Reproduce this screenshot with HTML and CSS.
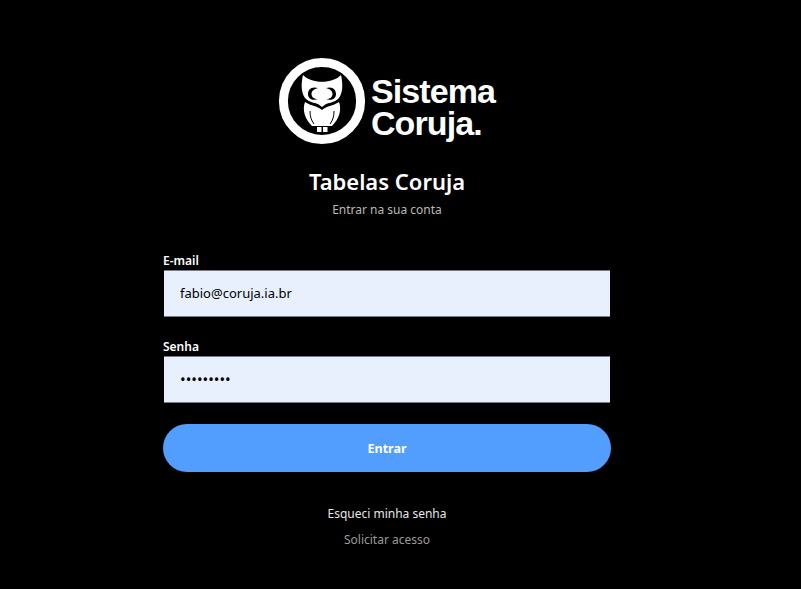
FILE: index.html
```html
<!DOCTYPE html>
<html lang="pt-BR">
  <head>
    <meta charset="UTF-8" />
    <meta name="viewport" content="width=device-width, initial-scale=1.0" />
    <title>Tabelas Coruja</title>
    <link rel="stylesheet" href="styles.css">
  </head>
  <body>
    <div class="login">
      <div class="logo">
        <svg class="logo-mark" width="88" height="90" viewBox="0 0 88 90">
          <circle cx="44" cy="45" r="38.6" fill="none" stroke="#fff" stroke-width="9" />
          <!-- head -->
          <path fill="#fff" d="M25 19 C33 28 55 28 63 19 C65 28 65 36 61 42 C56 47 50 47 48 48 L44 51 L40 48 C38 47 32 47 27 42 C23 36 23 28 25 19 Z" />
          <!-- eyes -->
          <path fill="#000" d="M40 32 C33 30 30 34 30 38 C30 43 35 45 40 43 C36 43 33.5 41 33.5 38 C33.5 35 36 33 40 32 Z" />
          <path fill="#000" d="M48 32 C55 30 58 34 58 38 C58 43 53 45 48 43 C52 43 54.5 41 54.5 38 C54.5 35 52 33 48 32 Z" />
          <!-- body and wings -->
          <path fill="#fff" d="M27 46 C33 50 40 50 44 54 C48 50 55 50 61 46 C64 54 61 63 54 70 L34 70 C27 63 24 54 27 46 Z" />
          <path fill="none" stroke="#000" stroke-width="1" d="M32 55 C32 60 33 64 36 68" />
          <path fill="none" stroke="#000" stroke-width="1" d="M56 55 C56 60 55 64 52 68" />
          <!-- feet -->
          <rect x="39" y="71" width="4.5" height="5" fill="#fff" />
          <rect x="45" y="71" width="4.5" height="5" fill="#fff" />
        </svg>
        <div class="logo-text">Sistema<br>Coruja.</div>
      </div>

      <h1>Tabelas Coruja</h1>
      <p class="subtitle">Entrar na sua conta</p>

      <form class="login-form">
        <label for="email">E-mail</label>
        <input type="email" id="email" value="fabio@coruja.ia.br" />
        <label for="senha">Senha</label>
        <input type="password" id="senha" value="123456789" />
        <button type="submit">Entrar</button>
      </form>

      <a class="forgot" href="#">Esqueci minha senha</a>
      <a class="request" href="#">Solicitar acesso</a>
    </div>
  </body>
</html>
```

FILE: styles.css
```css
body {
  margin: 0;
  padding: 0 27px 0 0;
  height: 589px;
  overflow: hidden;
  box-sizing: border-box;
  background-color: #000;
  color: #fff;
  font-family: "Noto Sans", "Open Sans", sans-serif;
}
.login {
  display: flex;
  flex-direction: column;
  align-items: center;
  padding-top: 56px;
}
.logo {
  display: flex;
  align-items: center;
  gap: 5px;
  height: 90px;
}
.logo-mark {
  display: block;
  margin-left: -1px;
}
.logo-text {
  font-family: "Liberation Sans", Arial, sans-serif;
  font-size: 34px;
  font-weight: 700;
  line-height: 32px;
  letter-spacing: -0.9px;
  margin-top: 11px;
}
h1 {
  margin: 19px 0 0;
  font-size: 22px;
  font-weight: 600;
  line-height: 32px;
}
.subtitle {
  margin: 3px 0 0;
  font-size: 12px;
  line-height: 20px;
  color: #b9b9b9;
}
.login-form {
  display: flex;
  flex-direction: column;
  width: 448px;
  margin-top: 32px;
}
label {
  font-size: 12px;
  font-weight: 600;
  line-height: 17px;
  color: #fff;
}
input {
  height: 47px;
  box-sizing: border-box;
  margin: 0.5px 1px 21.5px;
  padding: 0 16px;
  border: none;
  border-top: 1px solid #777b82;
  border-bottom: 1px solid #777b82;
  background-color: #e8f0fe;
  color: #000;
  font-family: inherit;
  font-size: 13px;
  outline: none;
}
input[type="password"] {
  font-size: 15px;
}
button {
  height: 48px;
  border: none;
  border-radius: 24px;
  background-color: #529eff;
  color: #fff;
  font-family: inherit;
  font-size: 12.5px;
  font-weight: 700;
  cursor: pointer;
}
a {
  text-decoration: none;
  font-size: 12px;
  line-height: 18px;
}
.forgot {
  margin-top: 33px;
  color: #e6e6e6;
}
.request {
  margin-top: 8px;
  color: #9a9a9a;
}
```
